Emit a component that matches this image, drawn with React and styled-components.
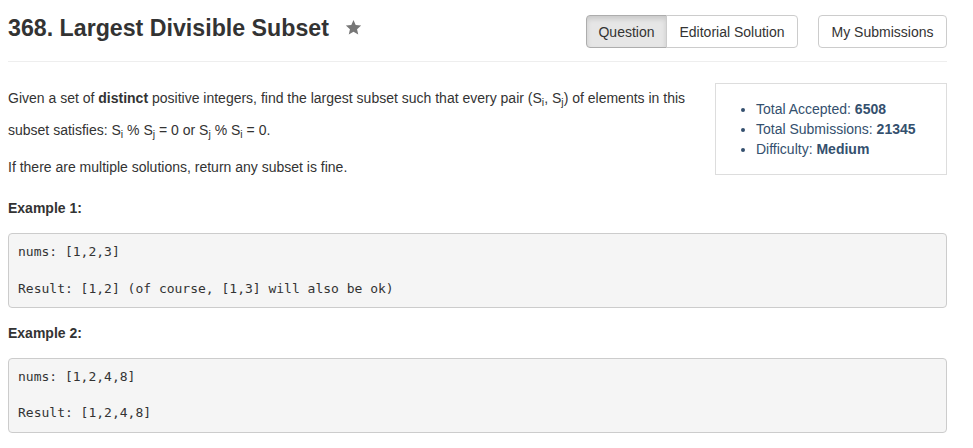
import React from "react";
import styled, { createGlobalStyle } from "styled-components";

const Global = createGlobalStyle`
  html, body { margin: 0; padding: 0; background: #fff; }
  body {
    font-family: "Liberation Sans", Arial, sans-serif;
    font-size: 14px;
    color: #333;
  }
`;

const Page = styled.div`
  width: 939px;
  margin-left: 8px;
`;

const Header = styled.header`
  display: flex;
  align-items: flex-start;
  padding: 15px 0 13px;
  border-bottom: 1px solid #eee;
`;

const Title = styled.h1`
  margin: 1px 0 0;
  font-size: 23.2px;
  line-height: 1.1;
  font-weight: 700;
  color: #333;
`;

const StarWrap = styled.span`
  display: inline-flex;
  margin: 4px 0 0 16px;
`;

const Spacer = styled.div`
  flex: 1;
`;

const BtnGroup = styled.div`
  display: flex;
  margin-right: 20px;
`;

const Btn = styled.button`
  box-sizing: border-box;
  width: ${(p) => p.$w}px;
  height: 33px;
  padding: 0;
  font-family: "Liberation Sans", Arial, sans-serif;
  font-size: 14px;
  color: #333;
  background: ${(p) => (p.$active ? "#e6e6e6" : "#fff")};
  border: 1px solid ${(p) => (p.$active ? "#adadad" : "#ccc")};
  box-shadow: ${(p) => (p.$active ? "inset 0 3px 5px rgba(0,0,0,.125)" : "none")};
  border-radius: 4px;
  cursor: pointer;
`;

const GroupBtn = styled(Btn)`
  &:first-child { border-top-right-radius: 0; border-bottom-right-radius: 0; }
  &:last-child { border-top-left-radius: 0; border-bottom-left-radius: 0; margin-left: -1px; }
`;

const DescRow = styled.section`
  display: flex;
  align-items: flex-start;
  gap: 15px;
  padding-top: 20px;
`;

const DescText = styled.div`
  flex: 1;
`;

const Para = styled.p`
  margin: 0 0 ${(p) => p.$mb || 0}px;
  line-height: 32px;
  font-size: 14px;
`;

const Sub = styled.sub`
  font-size: 75%;
  line-height: 1;
  position: relative;
  vertical-align: baseline;
  bottom: -0.25em;
`;

const Stats = styled.div`
  box-sizing: border-box;
  width: 232px;
  margin-top: 1px;
  border: 1px solid #ddd;
  color: #34506e;
`;

const StatList = styled.ul`
  margin: 15px 0 15px;
  padding-left: 40px;
  line-height: 20px;
  font-size: 14px;
`;

const Label = styled.p`
  margin: 15px 0 15px;
  font-weight: 700;
  line-height: 20px;
  font-size: 14px;
`;

const Pre = styled.pre`
  margin: 0;
  padding: 9px;
  font-family: "DejaVu Sans Mono", Menlo, monospace;
  font-size: 13px;
  line-height: 18.3px;
  color: #333;
  background: #f5f5f5;
  border: 1px solid #ccc;
  border-radius: 4px;
  white-space: pre-wrap;
`;

const Star = () => (
  <svg width="17" height="17" viewBox="0 0 24 24">
    <polygon
      fill="#777"
      points="12,1.5 15.1,8.6 22.8,9.3 17,14.4 18.7,22 12,18 5.3,22 7,14.4 1.2,9.3 8.9,8.6"
    />
  </svg>
);

export default function App() {
  return (
    <>
      <Global />
      <Page>
        <Header>
          <Title>368. Largest Divisible Subset</Title>
          <StarWrap>
            <Star />
          </StarWrap>
          <Spacer />
          <BtnGroup>
            <GroupBtn $w={81} $active>Question</GroupBtn>
            <GroupBtn $w={132}>Editorial Solution</GroupBtn>
          </BtnGroup>
          <Btn $w={129}>My Submissions</Btn>
        </Header>

        <DescRow>
          <DescText>
            <Para $mb={5}>
              Given a set of <b>distinct</b> positive integers, find the largest subset such that
              every pair (S<Sub>i</Sub>, S<Sub>j</Sub>) of elements in this subset satisfies: S
              <Sub>i</Sub> % S<Sub>j</Sub> = 0 or S<Sub>j</Sub> % S<Sub>i</Sub> = 0.
            </Para>
            <Para>If there are multiple solutions, return any subset is fine.</Para>
          </DescText>
          <Stats>
            <StatList>
              <li>
                Total Accepted: <b>6508</b>
              </li>
              <li>
                Total Submissions: <b>21345</b>
              </li>
              <li>
                Difficulty: <b>Medium</b>
              </li>
            </StatList>
          </Stats>
        </DescRow>

        <Label>Example 1:</Label>
        <Pre>{"nums: [1,2,3]\n\nResult: [1,2] (of course, [1,3] will also be ok)"}</Pre>

        <Label>Example 2:</Label>
        <Pre>{"nums: [1,2,4,8]\n\nResult: [1,2,4,8]"}</Pre>
      </Page>
    </>
  );
}
